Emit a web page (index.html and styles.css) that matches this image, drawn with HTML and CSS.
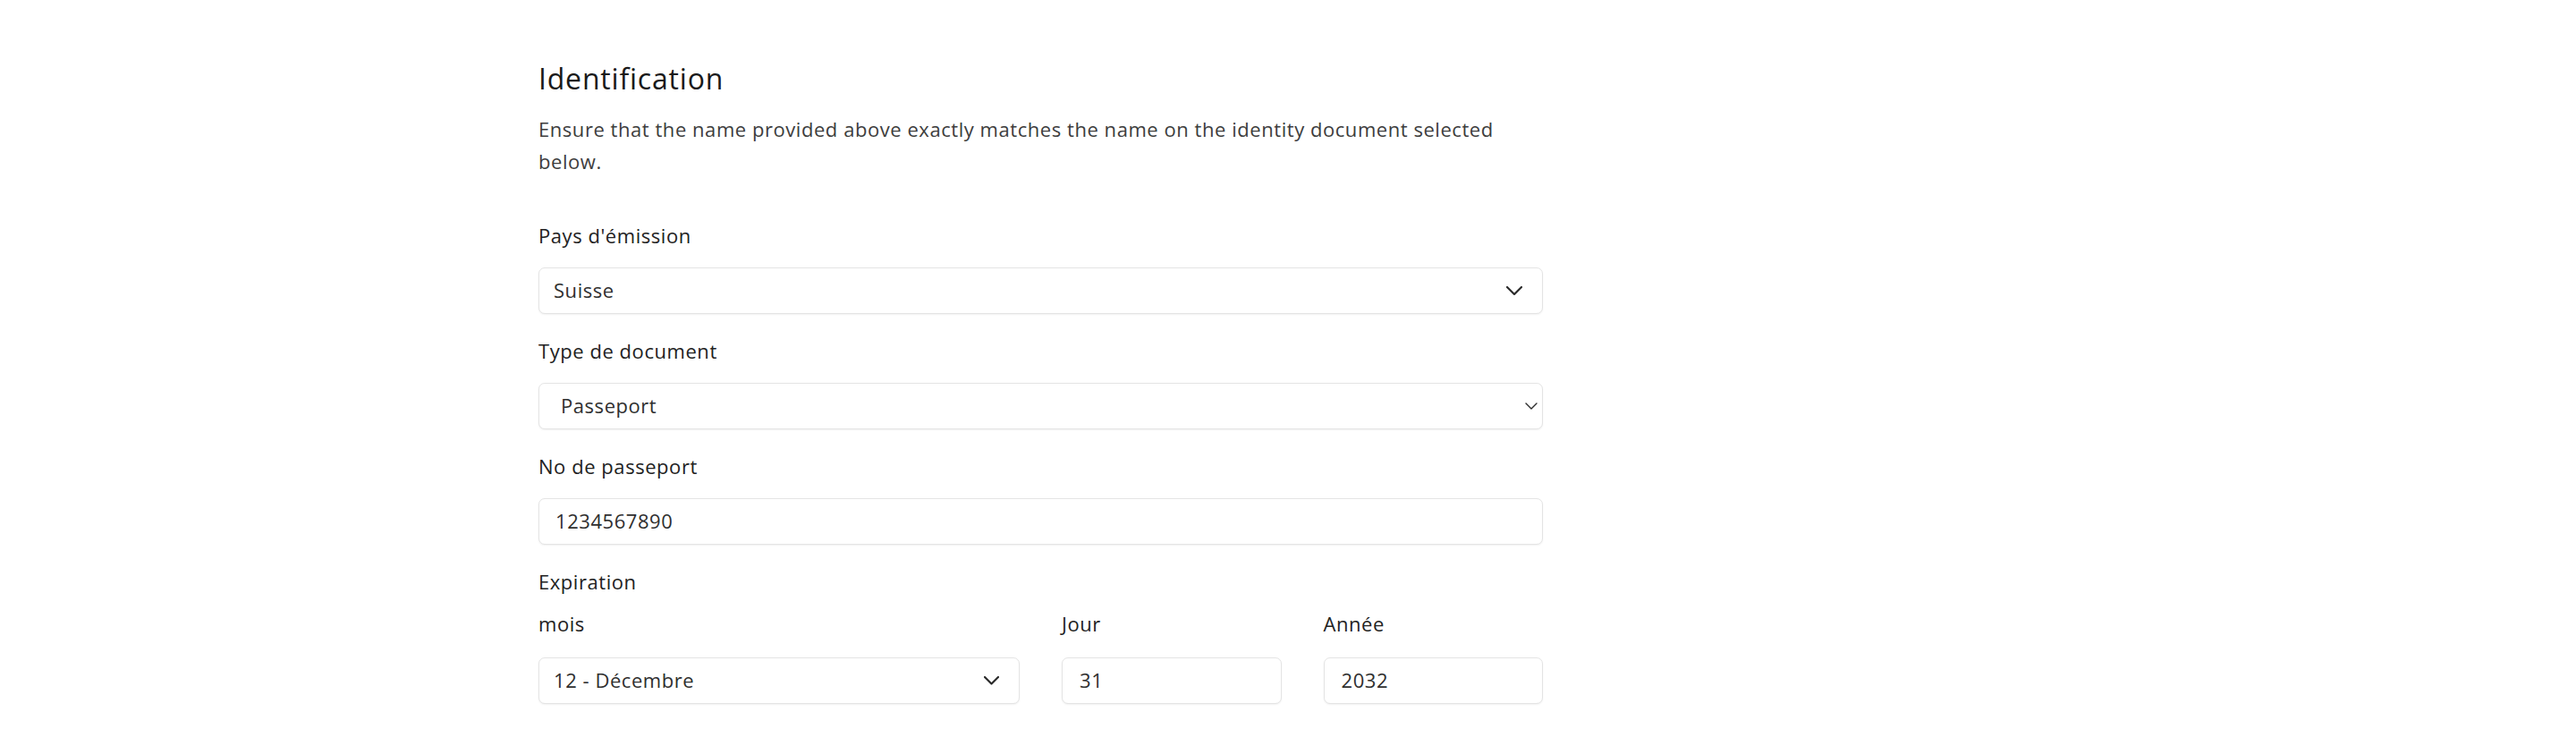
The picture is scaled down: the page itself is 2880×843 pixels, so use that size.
FILE: index.html
```html
<!DOCTYPE html>
<html lang="fr">
<head>
<meta charset="utf-8">
<title>Identification</title>
<link rel="stylesheet" href="styles.css">
</head>
<body>
<main class="page">
  <section class="form-section">
    <h2 class="section-title">Identification</h2>
    <p class="section-desc">Ensure that the name provided above exactly matches the name on the identity document selected below.</p>

    <div class="field">
      <label class="field-label" for="pays">Pays d'émission</label>
      <div class="control select-wrap">
        <select id="pays" class="box select pad-16"><option>Suisse</option></select>
        <svg class="chevron chevron-lg" viewBox="0 0 18 10" width="18" height="10"><path d="M1 1l8 8 8-8" fill="none" stroke="#2b2b2b" stroke-width="2.2" stroke-linecap="round" stroke-linejoin="round"/></svg>
      </div>
    </div>

    <div class="field">
      <label class="field-label" for="type">Type de document</label>
      <div class="control select-wrap">
        <select id="type" class="box select pad-24"><option>Passeport</option></select>
        <svg class="chevron chevron-sm" viewBox="0 0 14 8" width="14" height="8"><path d="M1 1l6 6 6-6" fill="none" stroke="#2b2b2b" stroke-width="1.4" stroke-linecap="round" stroke-linejoin="round"/></svg>
      </div>
    </div>

    <div class="field">
      <label class="field-label" for="num">No de passeport</label>
      <div class="control">
        <input id="num" class="box input pad-18" type="text" value="1234567890">
      </div>
    </div>

    <div class="field field-exp">
      <div class="group-label">Expiration</div>
      <div class="exp-row">
        <div class="exp-col col-half">
          <label class="field-label" for="mois">mois</label>
          <div class="control select-wrap">
            <select id="mois" class="box select pad-16"><option>12 - Décembre</option></select>
            <svg class="chevron chevron-md" viewBox="0 0 17 10" width="17" height="10"><path d="M1 1l7.5 7.5L16 1" fill="none" stroke="#2b2b2b" stroke-width="2.2" stroke-linecap="round" stroke-linejoin="round"/></svg>
          </div>
        </div>
        <div class="exp-col col-quarter">
          <label class="field-label" for="jour">Jour</label>
          <div class="control">
            <input id="jour" class="box input pad-19" type="text" value="31">
          </div>
        </div>
        <div class="exp-col col-quarter">
          <label class="field-label" for="annee">Année</label>
          <div class="control">
            <input id="annee" class="box input pad-19" type="text" value="2032">
          </div>
        </div>
      </div>
    </div>
  </section>
</main>
</body>
</html>
```

FILE: styles.css
```css
* { box-sizing: border-box; }

html, body {
  margin: 0;
  padding: 0;
  background: #ffffff;
}

body {
  font-family: "Open Sans", "Noto Sans", "Liberation Sans", sans-serif;
  color: #222222;
  letter-spacing: 0.55px;
}

.page {
  padding-top: 66px;
  padding-left: 602px;
}

.form-section {
  width: 1123px;
}

.section-title {
  margin: 0 0 17px 0;
  font-size: 32px;
  line-height: 43px;
  font-weight: 400;
  letter-spacing: 0.8px;
  color: #1a1a1a;
}

.section-desc {
  margin: 0 0 50px 0;
  font-size: 22px;
  line-height: 36px;
  color: #3d3d3d;
  max-width: 1123px;
}

.field {
  margin-bottom: 26px;
}

.field-label,
.group-label {
  display: block;
  font-size: 22px;
  line-height: 30px;
  color: #222222;
  margin-bottom: 21px;
}

.group-label {
  margin-bottom: 17px;
}

.control {
  position: relative;
}

.box {
  display: block;
  width: 100%;
  height: 52px;
  margin: 0;
  padding-top: 0;
  padding-bottom: 3px;
  border: 1px solid #e4e4e4;
  border-radius: 7px;
  background: #ffffff;
  box-shadow: 0 1px 2px rgba(0, 0, 0, 0.06);
  font-family: inherit;
  font-size: 22px;
  letter-spacing: inherit;
  color: #2f2f2f;
  outline: none;
}

.select {
  appearance: none;
  -webkit-appearance: none;
  padding-right: 48px;
}

.pad-16 { padding-left: 16px; }
.pad-18 { padding-left: 18px; }
.pad-19 { padding-left: 19px; }
.pad-24 { padding-left: 24px; }

.input {
  padding-right: 16px;
}

.chevron {
  position: absolute;
  top: 50%;
  pointer-events: none;
}

.chevron-lg {
  right: 23px;
  margin-top: -5px;
}

.chevron-sm {
  right: 6px;
  margin-top: -4px;
}

.chevron-md {
  right: 23px;
  margin-top: -5px;
}

.exp-row {
  display: flex;
  margin: 0 -23.5px;
}

.exp-col {
  padding: 0 23.5px;
}

.col-half { width: 50%; }
.col-quarter { width: 25%; }

.exp-col .field-label {
  margin-bottom: 23px;
}
```
